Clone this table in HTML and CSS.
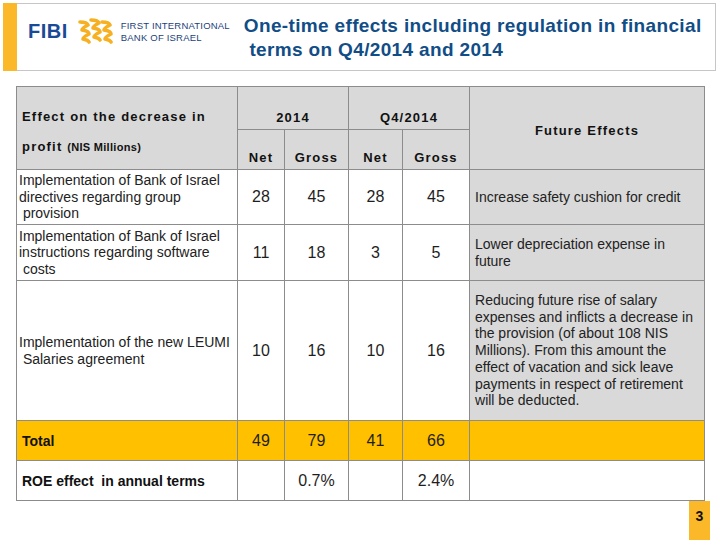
FILE: index.html
```html
<!DOCTYPE html>
<html>
<head>
<meta charset="utf-8">
<link rel="stylesheet" href="styles.css">
</head>
<body>
<header class="topbar">
  <div class="accent"></div>
  <div class="logo">
    <span class="fibi">FIBI</span>
    <svg class="swirl" width="36" height="26" viewBox="0 0 36 26">
      <g fill="none" stroke="#f6b022" stroke-width="3.6" stroke-linecap="round" stroke-linejoin="round">
        <path d="M2,4 Q9,4 10,7 Q4,10 4,12 Q11,13 11,16 Q5,19 5,21 Q10,22 11,24"/>
        <path d="M13,2 Q20,2 21,5 Q15,8 15,10 Q22,11 22,14 Q16,17 16,19 Q21,20 22,22"/>
        <path d="M24,4 Q31,4 32,7 Q26,10 26,12 Q33,13 33,16 Q27,19 27,21 Q32,22 33,24"/>
      </g>
    </svg>
    <div class="bankname">FIRST INTERNATIONAL<br>BANK OF ISRAEL</div>
  </div>
  <h1 class="title">One-time effects including regulation in financial<br>&nbsp;terms on Q4/2014 and 2014</h1>
</header>

<main class="content">
  <table class="fx">
    <colgroup>
      <col class="c-label"><col class="c-n1"><col class="c-g1"><col class="c-n2"><col class="c-g2"><col class="c-fut">
    </colgroup>
    <tr class="h1">
      <th rowspan="2" class="hlabel">Effect on the decrease in<br>profit <span class="small">(NIS Millions)</span></th>
      <th colspan="2" class="hyear">2014</th>
      <th colspan="2" class="hyear">Q4/2014</th>
      <th rowspan="2" class="hfut">Future Effects</th>
    </tr>
    <tr class="h2">
      <th class="hsub">Net</th><th class="hsub">Gross</th><th class="hsub">Net</th><th class="hsub">Gross</th>
    </tr>
    <tr class="r1">
      <td class="lbl">Implementation of Bank of Israel<br>directives regarding group<br>&nbsp;provision</td>
      <td class="num">28</td><td class="num">45</td><td class="num">28</td><td class="num">45</td>
      <td class="fut">Increase safety cushion for credit</td>
    </tr>
    <tr class="r2">
      <td class="lbl">Implementation of Bank of Israel<br>instructions regarding software<br>&nbsp;costs</td>
      <td class="num">11</td><td class="num">18</td><td class="num">3</td><td class="num">5</td>
      <td class="fut">Lower depreciation expense in<br>future</td>
    </tr>
    <tr class="r3">
      <td class="lbl">Implementation of the new LEUMI<br>&nbsp;Salaries agreement</td>
      <td class="num">10</td><td class="num">16</td><td class="num">10</td><td class="num">16</td>
      <td class="fut">Reducing future rise of salary<br>expenses and inflicts a decrease in<br>the provision (of about 108 NIS<br>Millions). From this amount the<br>effect of vacation and sick leave<br>payments in respect of retirement<br>will be deducted.</td>
    </tr>
    <tr class="total">
      <td class="blbl">Total</td>
      <td class="num">49</td><td class="num">79</td><td class="num">41</td><td class="num">66</td>
      <td></td>
    </tr>
    <tr class="roe">
      <td class="blbl">ROE effect&nbsp; in annual terms</td>
      <td></td><td class="num">0.7%</td><td></td><td class="num">2.4%</td>
      <td></td>
    </tr>
  </table>
  <div class="footer"><span class="pagenum">3</span></div>
</main>
</body>
</html>
```
FILE: styles.css
```css
html, body {
  margin: 0;
  padding: 0;
  background: #ffffff;
  font-family: "Liberation Sans", Arial, sans-serif;
}

.topbar {
  margin: 3px 4px 0 3px;
  height: 66px;
  border: 1px solid #c6c6c6;
  border-left: none;
  display: flex;
  align-items: flex-start;
}

.accent {
  width: 14px;
  align-self: stretch;
  margin-top: -1px;
  margin-bottom: -1px;
  background: #fbb829;
}

.logo {
  display: flex;
  align-items: center;
  margin-left: 11px;
  margin-top: 13px;
}

.fibi {
  font-weight: bold;
  font-size: 20px;
  color: #1a4a96;
  letter-spacing: 0.5px;
  line-height: 20px;
}

.swirl {
  margin-left: 10px;
  display: block;
}

.bankname {
  margin-left: 7px;
  font-size: 9.5px;
  line-height: 12px;
  color: #1d3f7c;
  letter-spacing: 0.2px;
  margin-top: 3px;
}

.title {
  margin: 10px 0 0 14px;
  font-size: 19px;
  line-height: 24px;
  font-weight: bold;
  letter-spacing: 0.35px;
  color: #114d86;
}

.content {
  padding: 15px 0 0 16px;
}

.fx {
  border-collapse: collapse;
  table-layout: fixed;
  width: 689px;
  color: #1e1e1e;
}

.c-label { width: 221px; }
.c-n1 { width: 47px; }
.c-g1 { width: 64px; }
.c-n2 { width: 54px; }
.c-g2 { width: 67px; }
.c-fut { width: 235px; }

.fx th, .fx td {
  border: 1px solid #8c8c8c;
  padding: 0;
}

.fx th {
  background: #d9d9d9;
  font-size: 13px;
  font-weight: bold;
  letter-spacing: 1.2px;
  color: #111;
}

.h1 { height: 43px; }
.h2 { height: 40px; }
.r1 { height: 55px; }
.r2 { height: 56px; }
.r3 { height: 140px; }
.total { height: 40px; }
.roe { height: 40px; }

.hlabel {
  text-align: left;
  vertical-align: top;
  padding: 15px 0 0 5px !important;
  line-height: 30px;
  letter-spacing: 1.3px;
}

.small {
  font-size: 11px;
  letter-spacing: 0.3px;
}

.hyear, .hsub {
  vertical-align: bottom;
  line-height: 16px;
  padding-bottom: 3px !important;
}

.hfut {
  vertical-align: middle;
  padding-top: 4px !important;
}

.lbl {
  font-size: 14px;
  line-height: 16.5px;
  padding-left: 2px !important;
  color: #222;
}

.num {
  text-align: center;
  font-size: 16px;
  color: #1e1e1e;
}

.fut {
  background: #d9d9d9;
  font-size: 14px;
  line-height: 16.7px;
  padding-left: 5px !important;
  color: #222;
}

.total td {
  background: #ffc000;
}

.blbl {
  font-size: 14px;
  font-weight: bold;
  padding-left: 5px !important;
  color: #111;
}

.footer {
  display: flex;
  justify-content: flex-end;
  width: 694px;
}

.pagenum {
  width: 21px;
  height: 40px;
  background: #fbb829;
  font-weight: bold;
  font-size: 14px;
  text-align: center;
  line-height: 30px;
  color: #111;
}
```
